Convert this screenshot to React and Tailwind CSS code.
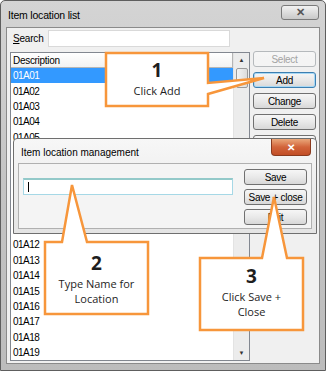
import React from 'react';

const rows = Array.from({ length: 19 }, (_, i) => `01A${String(i + 1).padStart(2, '0')}`);

function WinButton({ children, disabled, focused, hidden, className = '' }) {
    return (
        <div
            className={`h-[16px] flex items-center justify-center rounded-[3px] border text-[10px] tracking-[-0.3px] bg-gradient-to-b from-[#f6f6f6] via-[#e9e9e9] to-[#d8d8d8] ${
                disabled
                    ? 'border-[#b5b9bc] text-[#a3a3a3] from-[#f4f4f4] to-[#f4f4f4] via-[#f4f4f4]'
                    : focused
                    ? 'border-[#3c7fb1] text-black shadow-[inset_0_0_0_1px_#a7d8f5]'
                    : 'border-[#707070] text-black'
            } ${className}`}
        >
            <span className={hidden ? 'invisible' : ''}>{children}</span>
        </div>
    );
}

function Callout({ path, box, num, lines }) {
    return (
        <>
            <svg className="absolute left-0 top-0" width="326" height="371">
                <path d={path} fill="#ffffff" stroke="#f7963b" strokeWidth="2.5" strokeLinejoin="miter" />
            </svg>
            <div
                className="absolute flex flex-col items-center text-[#1e1e1e] font-['Open_Sans',sans-serif]"
                style={box}
            >
                <span className="text-[19px] font-bold leading-[26px]">{num}</span>
                {lines.map((l) => (
                    <span key={l} className="text-[11px] leading-[15px]">{l}</span>
                ))}
            </div>
        </>
    );
}

export default function App() {
    return (
        <div className="relative w-[326px] h-[371px] overflow-hidden bg-gradient-to-b from-[#d4d4d4] via-[#c4c4c4] to-[#bcbcbc] border border-[#5e5e5e] rounded-t-[5px] font-['Liberation_Sans',sans-serif]">
            {/* title bar */}
            <div className="h-[26px] flex items-start justify-between pl-[7px] pr-[6px]">
                <span className="mt-[7px] text-[10.5px] tracking-[-0.2px] text-black">Item location list</span>
                <div className="mt-[4px] w-[38px] h-[15px] rounded-[3px] border border-[#7a7a7a] bg-gradient-to-b from-[#f2f2f2] to-[#c9c9c9] flex items-center justify-center text-[11px] font-bold text-[#555]">
                    ✕
                </div>
            </div>

            {/* content */}
            <div className="mx-[5px] h-[337px] bg-[#f0f0f0] border border-[#8a8a8a]">
                <div className="flex items-center h-[18px] mt-[1px] pl-[6px]">
                    <span className="w-[35px] text-[10px] tracking-[-0.2px] text-black">
                        <span className="underline">S</span>earch
                    </span>
                    <div className="w-[182px] h-[17px] bg-white border border-[#d9d9d9]" />
                </div>

                <div className="flex gap-[3px] mt-[5px] pl-[3px]">
                    {/* list */}
                    <div className="w-[240px] h-[309px] bg-white border border-[#828790] flex">
                        <div className="w-[223px] border-r border-[#e3e3e3]">
                            <div className="h-[15px] flex items-center pl-[2px] text-[10px] tracking-[-0.3px] border-b border-r border-[#b5b5b5] bg-gradient-to-b from-white to-[#f2f2f2]">
                                <span>Description</span>
                            </div>
                            {rows.map((r, i) => (
                                <div
                                    key={r}
                                    className={`h-[15.4px] flex items-center pl-[2px] text-[10px] tracking-[-0.5px] ${
                                        i === 0 ? 'bg-[#3399ff] text-white' : 'text-black'
                                    }`}
                                >
                                    <span className={i >= 5 && i <= 10 ? 'invisible' : ''}>{r}</span>
                                </div>
                            ))}
                        </div>
                        {/* scrollbar */}
                        <div className="flex-1 bg-[#ececec] flex flex-col items-center">
                            <div className="h-[15px] flex items-center text-[6px] text-[#333]">▲</div>
                            <div className="w-[12px] h-[20px] rounded-[2px] border border-[#9a9a9a] bg-gradient-to-r from-[#f4f4f4] to-[#dcdcdc]" />
                            <div className="flex-1" />
                            <div className="h-[14px] flex items-center text-[6px] text-[#333]">▼</div>
                        </div>
                    </div>

                    {/* buttons */}
                    <div className="w-[63px] flex flex-col gap-[5px] -mt-[1px]">
                        <WinButton disabled>Select</WinButton>
                        <WinButton focused>Add</WinButton>
                        <WinButton>Change</WinButton>
                        <WinButton>Delete</WinButton>
                        <WinButton hidden>Close</WinButton>
                    </div>
                </div>
            </div>

            {/* inner dialog */}
            <div className="absolute left-[12px] top-[137px] w-[304px] h-[96px] border border-[#6f6f6f] rounded-t-[4px] bg-gradient-to-b from-[#f7f7f7] to-[#e4e4e4] flex flex-col">
                <div className="h-[24px] flex items-start justify-between pl-[7px] pr-[5px]">
                    <span className="mt-[6px] text-[10px] text-black">Item location management</span>
                    <div className="w-[40px] h-[17px] rounded-b-[4px] border border-[#8a3a1e] border-t-0 bg-gradient-to-b from-[#e9a77a] via-[#d2643a] to-[#c24e26] flex items-center justify-center text-[10px] font-bold text-white">
                        ✕
                    </div>
                </div>
                <div className="mx-[4px] h-[66px] bg-[#f4f4f4] border border-[#b0b0b0] flex pl-[4px] pr-[4px]">
                    <div className="w-[210px] h-[17px] mt-[14px] bg-white border border-[#a6d8e6] border-t-2 border-t-[#93c9c9] flex items-center pl-[4px]">
                        <div className="w-[1px] h-[10px] bg-black" />
                    </div>
                    <div className="flex-1" />
                    <div className="w-[63px] flex flex-col gap-[4px] mt-[5px]">
                        <WinButton>Save</WinButton>
                        <WinButton>Save + close</WinButton>
                        <WinButton>Exit</WinButton>
                    </div>
                </div>
            </div>

            {/* callouts */}
            <Callout
                path="M105,52 H207 V82 L263,77 L207,93 V105 H105 Z"
                box={{ left: 105, top: 56, width: 102 }}
                num="1"
                lines={['Click Add']}
            />
            <Callout
                path="M44,241 H61 L71,184 L86,241 H147 V313 H44 Z"
                box={{ left: 44, top: 249, width: 103 }}
                num="2"
                lines={['Type Name for', 'Location']}
            />
            <Callout
                path="M199,257 H261 L273,196 L286,257 H302 V329 H199 Z"
                box={{ left: 199, top: 262, width: 103 }}
                num="3"
                lines={['Click Save +', 'Close']}
            />
        </div>
    );
}
